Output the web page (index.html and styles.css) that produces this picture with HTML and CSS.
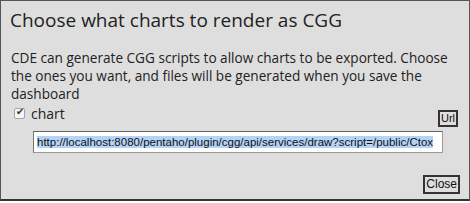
FILE: index.html
```html
<!DOCTYPE html>
<html lang="en">
<head>
    <meta charset="UTF-8">
    <meta name="viewport" content="width=device-width, initial-scale=1.0">
    <link rel="stylesheet" href="styles.css">
</head>
<body>
    <!-- CGG export dialog -->
    <div class="dialog">
        <div class="dialog-title">Choose what charts to render as CGG</div>
        <div class="dialog-body">
            <p class="intro">CDE can generate CGG scripts to allow charts to be exported. Choose the ones you want, and files will be generated when you save the dashboard</p>
            <div class="chart-row">
                <label class="chart-label"><input type="checkbox" checked> chart</label>
                <button class="btn">Url</button>
            </div>
            <div class="url-box"><span class="url-text">http://localhost:8080/pentaho/plugin/cgg/api/services/draw?script=/public/Ctox</span></div>
        </div>
        <div class="dialog-footer">
            <button class="btn">Close</button>
        </div>
    </div>
</body>
</html>
```

FILE: styles.css
```css
body {
    margin: 0;
    padding: 0;
    background-color: #ffffff;
}

/* Dialog */
.dialog {
    box-sizing: border-box;
    width: 470px;
    height: 201px;
    background-color: #dedede;
    border: 1px solid #555;
    border-bottom: 2px solid #333;
    font-family: "Open Sans", sans-serif;
    color: #222;
    display: flex;
    flex-direction: column;
}

.dialog-title {
    font-size: 19px;
    padding: 6px 0 0 9px;
    height: 31px;
}

.dialog-body {
    padding: 0 10px;
}

.intro {
    margin: 11px 0 0;
    font-size: 13.6px;
    line-height: 18px;
}

.chart-row {
    display: flex;
    justify-content: space-between;
    align-items: flex-start;
    margin-top: 1px;
}

.chart-label {
    font-size: 14px;
    display: flex;
    align-items: center;
    gap: 6px;
    padding-left: 3px;
}

/* Mac style checkbox */
.chart-label input {
    appearance: none;
    -webkit-appearance: none;
    margin: 0;
    width: 11px;
    height: 11px;
    border: 1px solid #a5a5a5;
    border-radius: 2px;
    background-color: #f6f6f6;
    position: relative;
}

.chart-label input:checked::after {
    content: "\2714";
    position: absolute;
    left: 1px;
    top: -3px;
    font-size: 10px;
    color: #333;
}

.btn {
    font-family: "Liberation Sans", Arial, sans-serif;
    font-size: 11px;
    background-color: #dedede;
    color: #111;
    border: 2px solid #333;
    padding: 0 1px;
    line-height: 13px;
    margin-top: 6px;
    margin-right: 1px;
}

.url-box {
    box-sizing: border-box;
    margin: 4px 0 0 22px;
    width: 410px;
    height: 22px;
    background: #fff;
    border: 1px solid #999;
    border-top-color: #666;
    border-left-color: #777;
    overflow: hidden;
    white-space: nowrap;
    padding: 3px 3px;
    font-family: "Liberation Sans", Arial, sans-serif;
    font-size: 11.5px;
    line-height: 14px;
    color: #111;
}

.url-text {
    background-color: #b4d3f7;
}

.dialog-footer {
    display: flex;
    justify-content: flex-end;
    padding: 22px 9px 0;
}

.dialog-footer .btn {
    margin: 0;
    font-size: 12px;
    line-height: 15px;
}
```
